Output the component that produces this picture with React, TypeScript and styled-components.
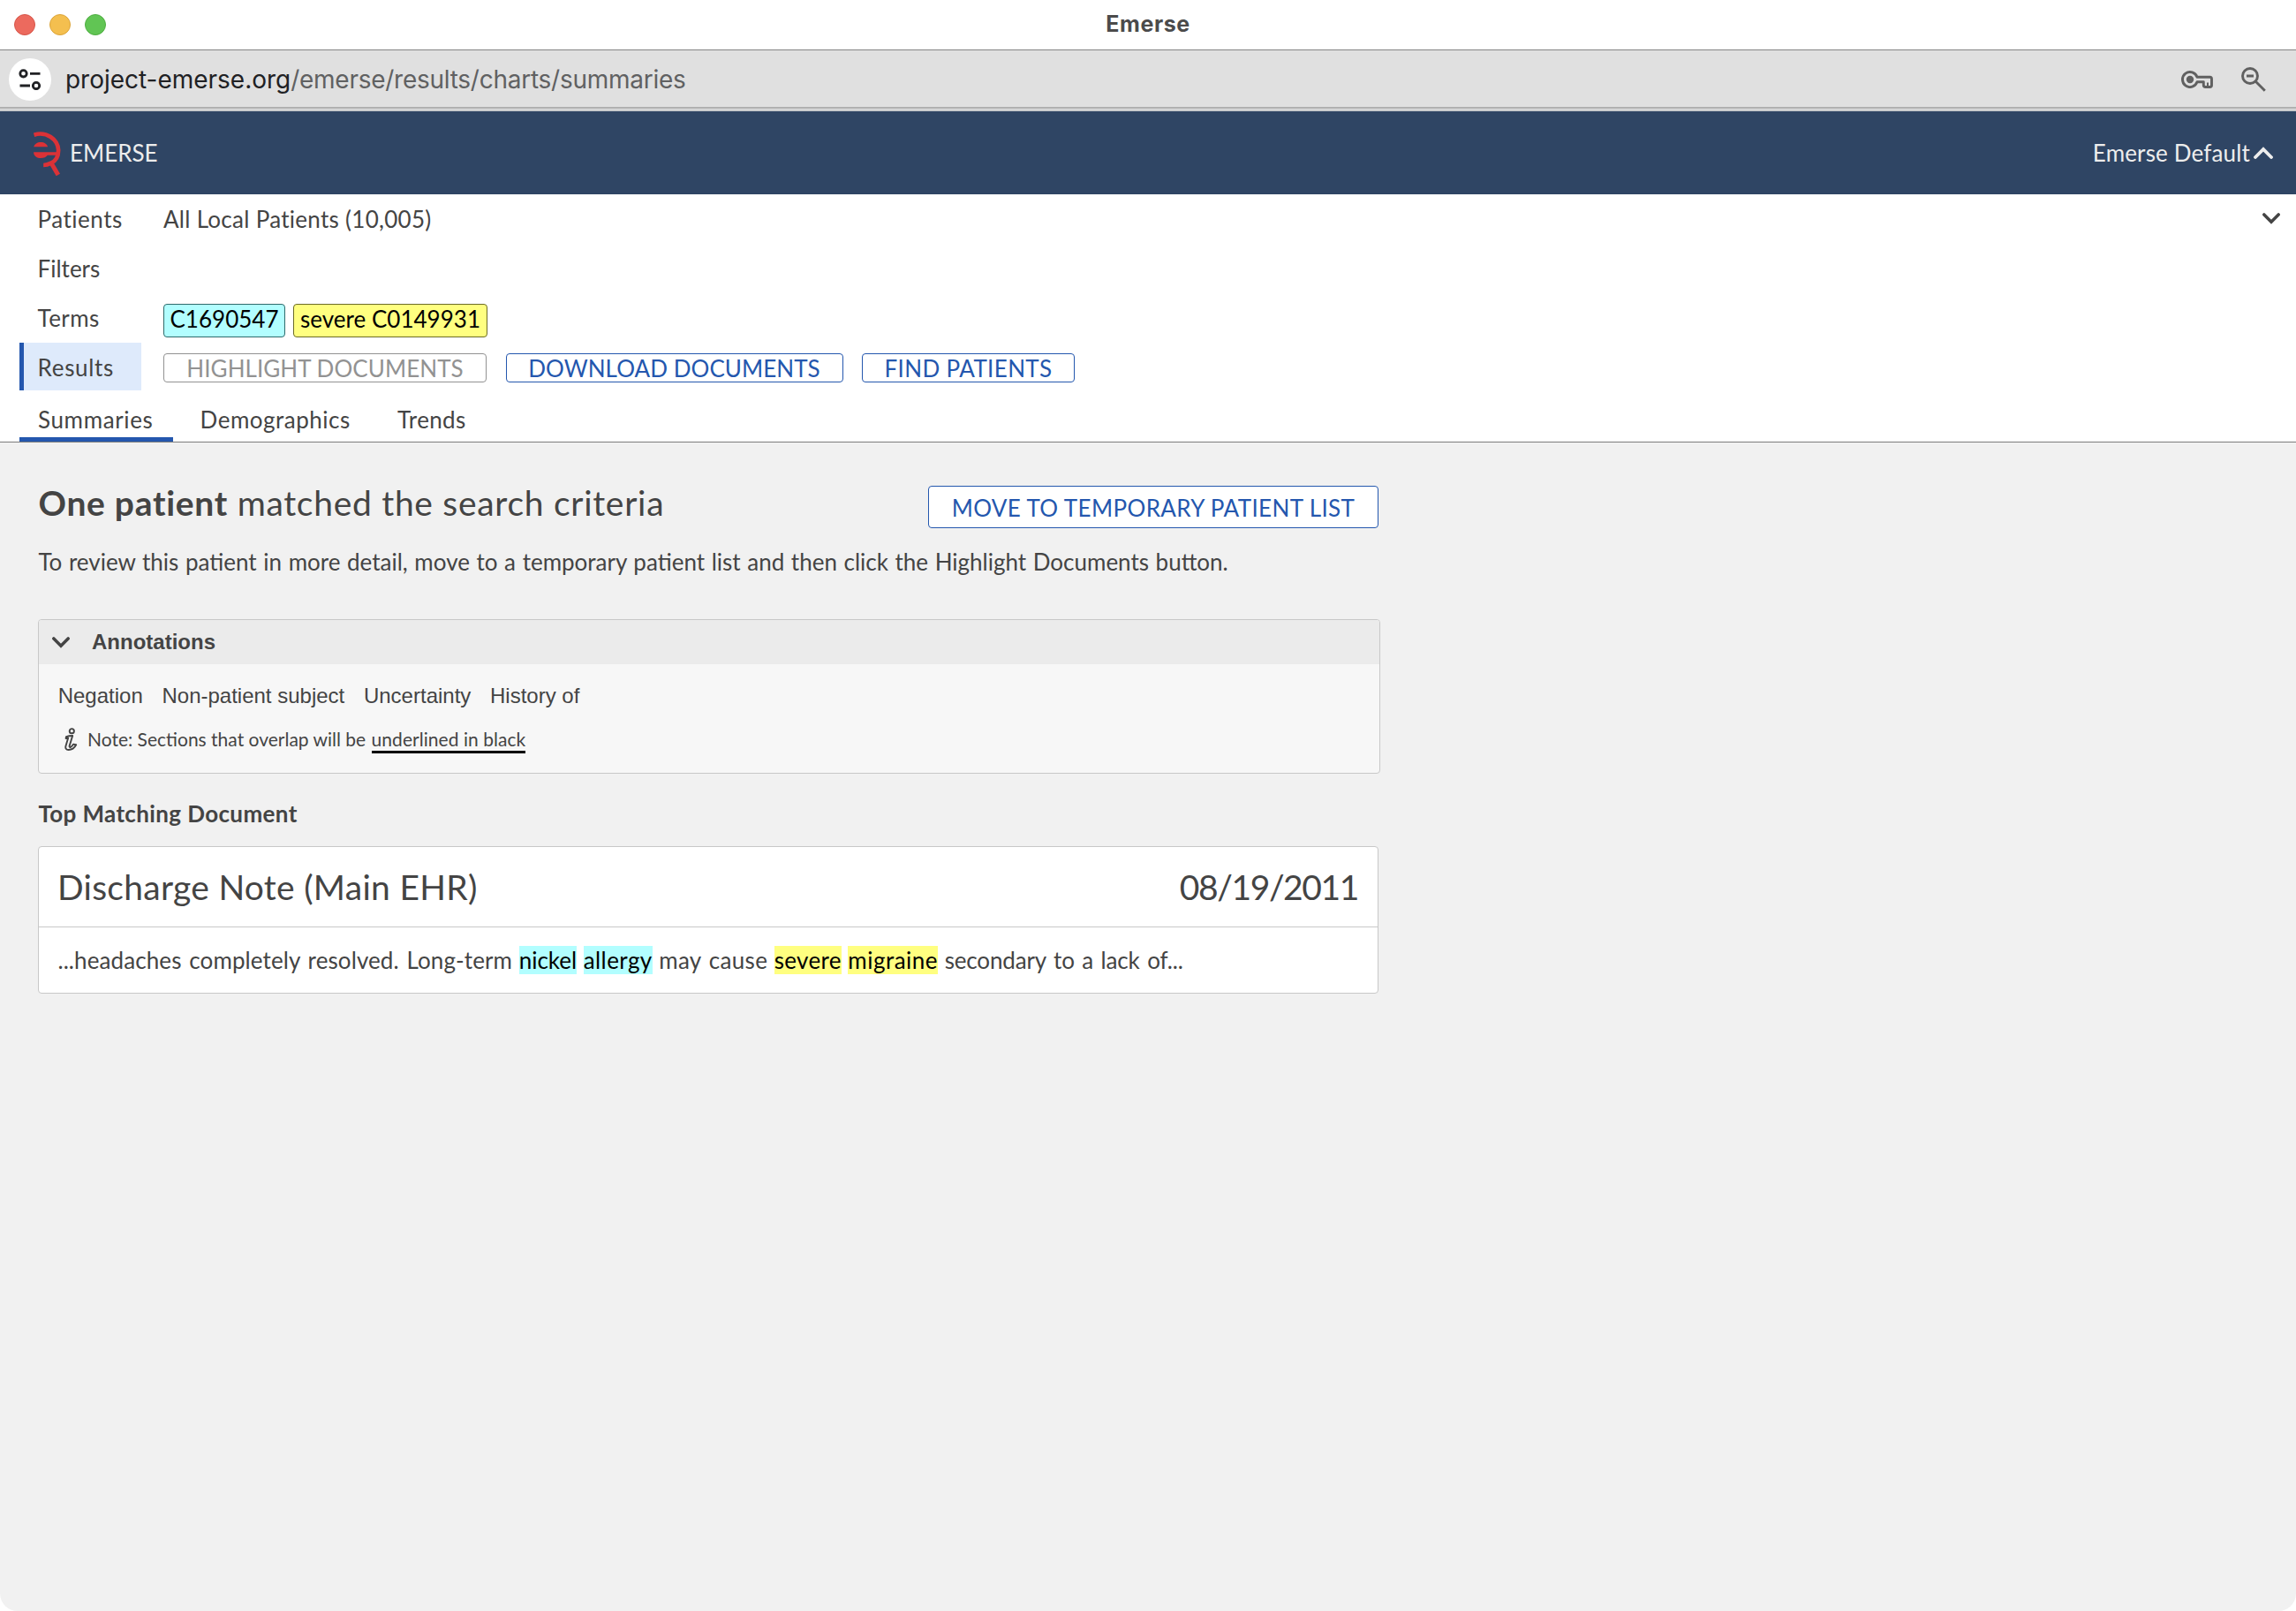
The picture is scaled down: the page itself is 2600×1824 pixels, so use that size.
import React from "react";
import styled, { createGlobalStyle } from "styled-components";

const ink = "#444444";
const blue = "#2457ae";

const Global = createGlobalStyle`
  html, body { margin: 0; padding: 0; background: #ffffff; }
  *, *::before, *::after { box-sizing: border-box; }
  svg { display: block; flex: none; }
`;

const Window = styled.div`
  width: 2600px;
  height: 1824px;
  display: flex;
  flex-direction: column;
  overflow: hidden;
  border-radius: 0 0 20px 20px;
  background: #f1f1f1;
  color: ${ink};
  font: 400 26px/32px Lato, "Open Sans", sans-serif;
`;

const TitleBar = styled.header`
  height: 56px;
  flex: none;
  display: grid;
  grid-template-columns: 1fr auto 1fr;
  align-items: center;
  padding: 0 16px;
  background: #ffffff;
`;

const Lights = styled.div`
  display: flex;
  gap: 16px;
`;

const Light = styled.span<{ $fill: string; $edge: string }>`
  width: 24px;
  height: 24px;
  border-radius: 50%;
  background: ${(p) => p.$fill};
  border: 1px solid ${(p) => p.$edge};
`;

const WindowTitle = styled.h1`
  margin: 0 0 2px;
  font: 700 25px/30px Inter, sans-serif;
  letter-spacing: 0.6px;
  color: #4b4b4b;
`;

const AddressBar = styled.div`
  height: 67px;
  flex: none;
  display: flex;
  align-items: center;
  padding: 1px 34px 0 10px;
  background: #e0e0e0;
  border-top: 1px solid #858585;
  border-bottom: 2px solid #b0b0b0;
`;

const AddressEdge = styled.div`
  height: 3px;
  flex: none;
  background: #c9cbcd;
  border-top: 1px solid #dedede;
`;

const SiteButton = styled.button`
  width: 48px;
  height: 48px;
  padding: 0;
  border: 0;
  border-radius: 50%;
  background: #ffffff;
  display: grid;
  place-items: center;
  color: #202124;
`;

const Url = styled.div`
  flex: 1;
  margin-left: 16px;
  padding-top: 1px;
  font: 400 28px/34px Inter, sans-serif;
  letter-spacing: -0.02px;
  color: #202124;
`;

const UrlPath = styled.span`
  letter-spacing: -0.26px;
  color: #606162;
`;

const AddressActions = styled.div`
  display: flex;
  align-items: center;
  gap: 32px;
  color: #606060;
`;

const AppHeader = styled.div`
  height: 94px;
  flex: none;
  display: flex;
  align-items: center;
  justify-content: space-between;
  padding: 0 26px 0 38px;
  background: #2f4564;
  color: #ededed;
`;

const Brand = styled.div`
  display: flex;
  align-items: center;
  gap: 10px;

  svg { margin-top: 2px; }
`;

const Account = styled.div`
  display: flex;
  align-items: center;
  gap: 4px;
  letter-spacing: 0.16px;
`;

const SearchPanel = styled.section`
  height: 281px;
  flex: none;
  background: #ffffff;
  border-bottom: 1px solid #7c7c7c;
  padding-left: 22px;
`;

const Rows = styled.div`
  display: grid;
  row-gap: 2px;
`;

const Row = styled.div`
  display: grid;
  grid-template-columns: 138px 1fr auto;
  column-gap: 25px;
  align-items: center;
  height: 54px;
  padding-right: 18px;
`;

const RowLabel = styled.div<{ $active?: boolean; $track: number }>`
  height: 54px;
  padding: 1px 0 0 15.6px;
  border-left: 5px solid ${(p) => (p.$active ? blue : "transparent")};
  background: ${(p) => (p.$active ? "#deeafb" : "transparent")};
  line-height: 54px;
  letter-spacing: ${(p) => p.$track}px;
`;

const RowValue = styled.div<{ $gap?: number; $top?: number }>`
  display: flex;
  gap: ${(p) => p.$gap ?? 0}px;
  padding-top: ${(p) => p.$top ?? 1}px;
  letter-spacing: 0.29px;
`;

const Chip = styled.span<{ $fill: string; $edge: string; $width: number }>`
  width: ${(p) => p.$width}px;
  height: 38px;
  border: 1px solid ${(p) => p.$edge};
  border-radius: 4px;
  background: ${(p) => p.$fill};
  color: #000000;
  text-align: center;
  line-height: 32px;
  letter-spacing: 0.02px;
`;

const Button = styled.button<{ $width: number; $height?: number; $track: number }>`
  width: ${(p) => p.$width}px;
  height: ${(p) => p.$height ?? 33}px;
  flex: none;
  padding: 1px 0 0;
  border: 1px solid ${blue};
  border-radius: 4px;
  background: #ffffff;
  color: ${blue};
  font: 400 26px/30px Lato, sans-serif;
  letter-spacing: ${(p) => p.$track}px;
  white-space: nowrap;

  &:disabled {
    border-color: #929292;
    color: #929292;
  }
`;

const Tabs = styled.nav`
  display: flex;
  height: 58px;
  padding-top: 5px;
`;

const Tab = styled.a<{ $active?: boolean; $width: number; $inset?: number; $track: number }>`
  width: ${(p) => p.$width}px;
  height: 53px;
  padding: 2px 0 0 ${(p) => p.$inset ?? 21}px;
  border-bottom: 5px solid ${(p) => (p.$active ? blue : "transparent")};
  line-height: 53px;
  letter-spacing: ${(p) => p.$track}px;
`;

const Main = styled.main`
  width: 1563px;
  padding: 49px 0 0 43px;
  display: flex;
  flex-direction: column;
`;

const Summary = styled.div`
  display: flex;
  justify-content: space-between;
  width: 1518px;
  height: 48px;
`;

const Headline = styled.h2`
  margin: 0;
  padding-left: 0.5px;
  font: 400 39px/38px Lato, sans-serif;
  letter-spacing: 0.71px;
`;

const Hint = styled.p`
  margin: 22px 0 0;
  padding-left: 0.4px;
  word-spacing: 0.95px;
  white-space: nowrap;
`;

const Panel = styled.section`
  width: 1520px;
  height: 175px;
  margin-top: 49px;
  border: 1px solid #c8c8c8;
  border-radius: 4px;
  background: #f7f7f7;
  font-family: "Liberation Sans", Arial, sans-serif;
  font-size: 24px;
  overflow: hidden;
`;

const PanelHead = styled.header`
  height: 50px;
  display: flex;
  align-items: center;
  gap: 25px;
  padding-left: 15px;
  background: #ebebeb;
  font-weight: 700;

  svg { margin-top: 1px; }
`;

const Kinds = styled.div`
  display: flex;
  gap: 21.7px;
  padding: 20px 0 0 21.7px;
`;

const Note = styled.div`
  display: flex;
  align-items: center;
  height: 34px;
  margin-top: 16px;
  padding-left: 29px;
  font: 400 21px/30px Lato, sans-serif;
  white-space: pre;

  svg { margin-right: 11px; }
`;

const Overlap = styled.span`
  margin-left: 1px;
  letter-spacing: 0.04px;
  border-bottom: 3px solid #000000;
  padding-bottom: 1px;
`;

const SectionTitle = styled.h3`
  margin: 29px 0 0;
  padding-left: 0.4px;
  font: 700 26px/32px Lato, sans-serif;
  letter-spacing: 0.38px;
`;

const Card = styled.article`
  width: 1518px;
  height: 167px;
  margin-top: 21px;
  border: 1px solid #c8c8c8;
  border-radius: 4px;
  background: #ffffff;
`;

const CardHead = styled.header`
  height: 91px;
  display: flex;
  justify-content: space-between;
  padding: 0 22px 0 21px;
  border-bottom: 1px solid #c8c8c8;
  font-size: 39px;
  line-height: 90px;
`;

const CardTitle = styled.span`
  letter-spacing: 0.28px;
`;

const CardDate = styled.time`
  letter-spacing: -1.4px;
`;

const Snippet = styled.p`
  margin: 0;
  padding: 1px 0 0 21.4px;
  line-height: 73px;
  word-spacing: 0.9px;
  white-space: nowrap;
`;

const Run = styled.span<{ $track: number }>`
  letter-spacing: ${(p) => p.$track}px;
  word-spacing: 2px;
`;

const Mark = styled.mark<{ $fill: string; $track: number }>`
  background: ${(p) => p.$fill};
  color: #000000;
  letter-spacing: ${(p) => p.$track}px;
`;

const cyan = "#b2feff";
const yellow = "#ffff80";

function Chevron({ up, width = 22, height = 14 }: { up?: boolean; width?: number; height?: number }) {
  return (
    <svg width={width} height={height} viewBox="0 0 22 14" fill="none" stroke="currentColor" strokeWidth="3.8" strokeLinecap="round" strokeLinejoin="miter">
      <path d={up ? "M2 12 11 3 20 12" : "M2 2 11 11.2 20 2"} />
    </svg>
  );
}

function Logo() {
  return (
    <svg width="31" height="50" viewBox="55 57 92 150" fill="none" stroke="#db3237" strokeWidth="14">
      <path d="M56 68C98 55 137 82 139 120C139 142 129 157 114 164C106 168 98 171 88 171" />
      <path d="M114 163 138 204" strokeWidth="15" />
      <path d="M55 109C58 99 67 93 79 93C91 93 100 99 103 109Z" fill="#db3237" stroke="none" />
      <path d="M55 127H138V137H102C98 143 89 147 79 147C66 147 57 140 55 131Z" fill="#db3237" stroke="none" />
    </svg>
  );
}

function Tune() {
  return (
    <svg width="26" height="24" viewBox="0 0 26 24" fill="none" stroke="currentColor" strokeWidth="2.8">
      <circle cx="5.5" cy="5.3" r="3.7" />
      <path d="M13 5.3H24.5M1.5 19H13" />
      <circle cx="20" cy="19" r="3.7" />
    </svg>
  );
}

function Key() {
  return (
    <svg width="36" height="20" viewBox="0 0 36 20" fill="none" stroke="currentColor" strokeWidth="2.9">
      <path d="M18 7.3H32.5Q34.5 7.3 34.5 9.5V16.6Q34.5 18.5 32.5 18.5H27.5Q25.3 18.5 25.3 16.6V12.8H18A8.5 8.5 0 1 1 18 7.3Z" strokeLinejoin="round" />
      <circle cx="10" cy="10" r="4.2" fill="currentColor" stroke="none" />
      <path d="M30 13.5V19" strokeWidth="2" />
    </svg>
  );
}

function ZoomOut() {
  return (
    <svg width="28" height="28" viewBox="0 0 28 28" fill="none" stroke="currentColor" strokeWidth="2.9">
      <circle cx="10" cy="10" r="8.5" />
      <path d="M6 10H14M16.3 16.3 26.8 26.8" />
    </svg>
  );
}

function Info() {
  return (
    <svg width="15" height="26" viewBox="0 0 15 26" fill="none" stroke="currentColor" strokeWidth="1.9" strokeLinecap="round" strokeLinejoin="round">
      <circle cx="8.3" cy="3.7" r="2.6" />
      <path d="M2 10.2C4.5 9.2 7 9 9.2 9L5.6 20.6C5.4 21.8 6 22.2 7 21.8C8.5 21.2 9.4 19.7 10 18.6L13.2 19.3C11 23.5 7.6 25 4.6 25C1.8 25 .8 23 1.5 20.6L4.2 11.6L1.6 12Z" />
    </svg>
  );
}

export default function App() {
  return (
    <>
      <Global />
      <Window>
        <TitleBar>
          <Lights>
            <Light $fill="#ec6a5e" $edge="#d65549" />
            <Light $fill="#f4bf4f" $edge="#dca53a" />
            <Light $fill="#61c554" $edge="#4eae41" />
          </Lights>
          <WindowTitle>Emerse</WindowTitle>
          <span />
        </TitleBar>

        <AddressBar>
          <SiteButton><Tune /></SiteButton>
          <Url>project-emerse.org<UrlPath>/emerse/results/charts/summaries</UrlPath></Url>
          <AddressActions>
            <Key />
            <ZoomOut />
          </AddressActions>
        </AddressBar>
        <AddressEdge />

        <AppHeader>
          <Brand><Logo />EMERSE</Brand>
          <Account>Emerse Default<Chevron up /></Account>
        </AppHeader>

        <SearchPanel>
          <Rows>
            <Row>
              <RowLabel $track={0.5}>Patients</RowLabel>
              <RowValue>All Local Patients (10,005)</RowValue>
              <Chevron width={20} height={13} />
            </Row>
            <Row>
              <RowLabel $track={0}>Filters</RowLabel>
            </Row>
            <Row>
              <RowLabel $track={0.4}>Terms</RowLabel>
              <RowValue $gap={9} $top={8}>
                <Chip $fill={cyan} $edge="#2f6a6b" $width={138}>C1690547</Chip>
                <Chip $fill={yellow} $edge="#6b6b26" $width={220}>severe C0149931</Chip>
              </RowValue>
            </Row>
            <Row>
              <RowLabel $track={0.68} $active>Results</RowLabel>
              <RowValue $gap={21.5} $top={3}>
                <Button $width={366} $track={0.06} disabled>HIGHLIGHT DOCUMENTS</Button>
                <Button $width={382} $track={0.06}>DOWNLOAD DOCUMENTS</Button>
                <Button $width={241} $track={0.36}>FIND PATIENTS</Button>
              </RowValue>
            </Row>
          </Rows>
          <Tabs>
            <Tab $width={174} $track={0.64} $active>Summaries</Tab>
            <Tab $width={222} $inset={30.6} $track={0.5}>Demographics</Tab>
            <Tab $width={130} $inset={32} $track={0.36}>Trends</Tab>
          </Tabs>
        </SearchPanel>

        <Main>
          <Summary>
            <Headline><b>One patient</b> matched the search criteria</Headline>
            <Button $width={510} $height={48} $track={0.38}>MOVE TO TEMPORARY PATIENT LIST</Button>
          </Summary>
          <Hint>
            To review this patient in more detail, move to a temporary patient list and then click the Highlight Documents button.
          </Hint>

          <Panel>
            <PanelHead><Chevron width={20} height={13} />Annotations</PanelHead>
            <Kinds>
              <span>Negation</span>
              <span>Non-patient subject</span>
              <span>Uncertainty</span>
              <span>History of</span>
            </Kinds>
            <Note>
              <Info />
              <span>Note: Sections that overlap will be <Overlap>underlined in black</Overlap></span>
            </Note>
          </Panel>

          <SectionTitle>Top Matching Document</SectionTitle>
          <Card>
            <CardHead>
              <CardTitle>Discharge Note (Main EHR)</CardTitle>
              <CardDate>08/19/2011</CardDate>
            </CardHead>
            <Snippet>
              <Run $track={0.1}>...headaches completely resolved. Long-term</Run>{" "}
              <Mark $fill={cyan} $track={0}>nickel</Mark>{" "}
              <Mark $fill={cyan} $track={0.42}>allergy</Mark>{" "}
              <Run $track={0.3}>may cause</Run>{" "}
              <Mark $fill={yellow} $track={0.3}>severe</Mark>{" "}
              <Mark $fill={yellow} $track={0.5}>migraine</Mark>{" "}
              <Run $track={-0.14}>secondary to a lack of...</Run>
            </Snippet>
          </Card>
        </Main>
      </Window>
    </>
  );
}
